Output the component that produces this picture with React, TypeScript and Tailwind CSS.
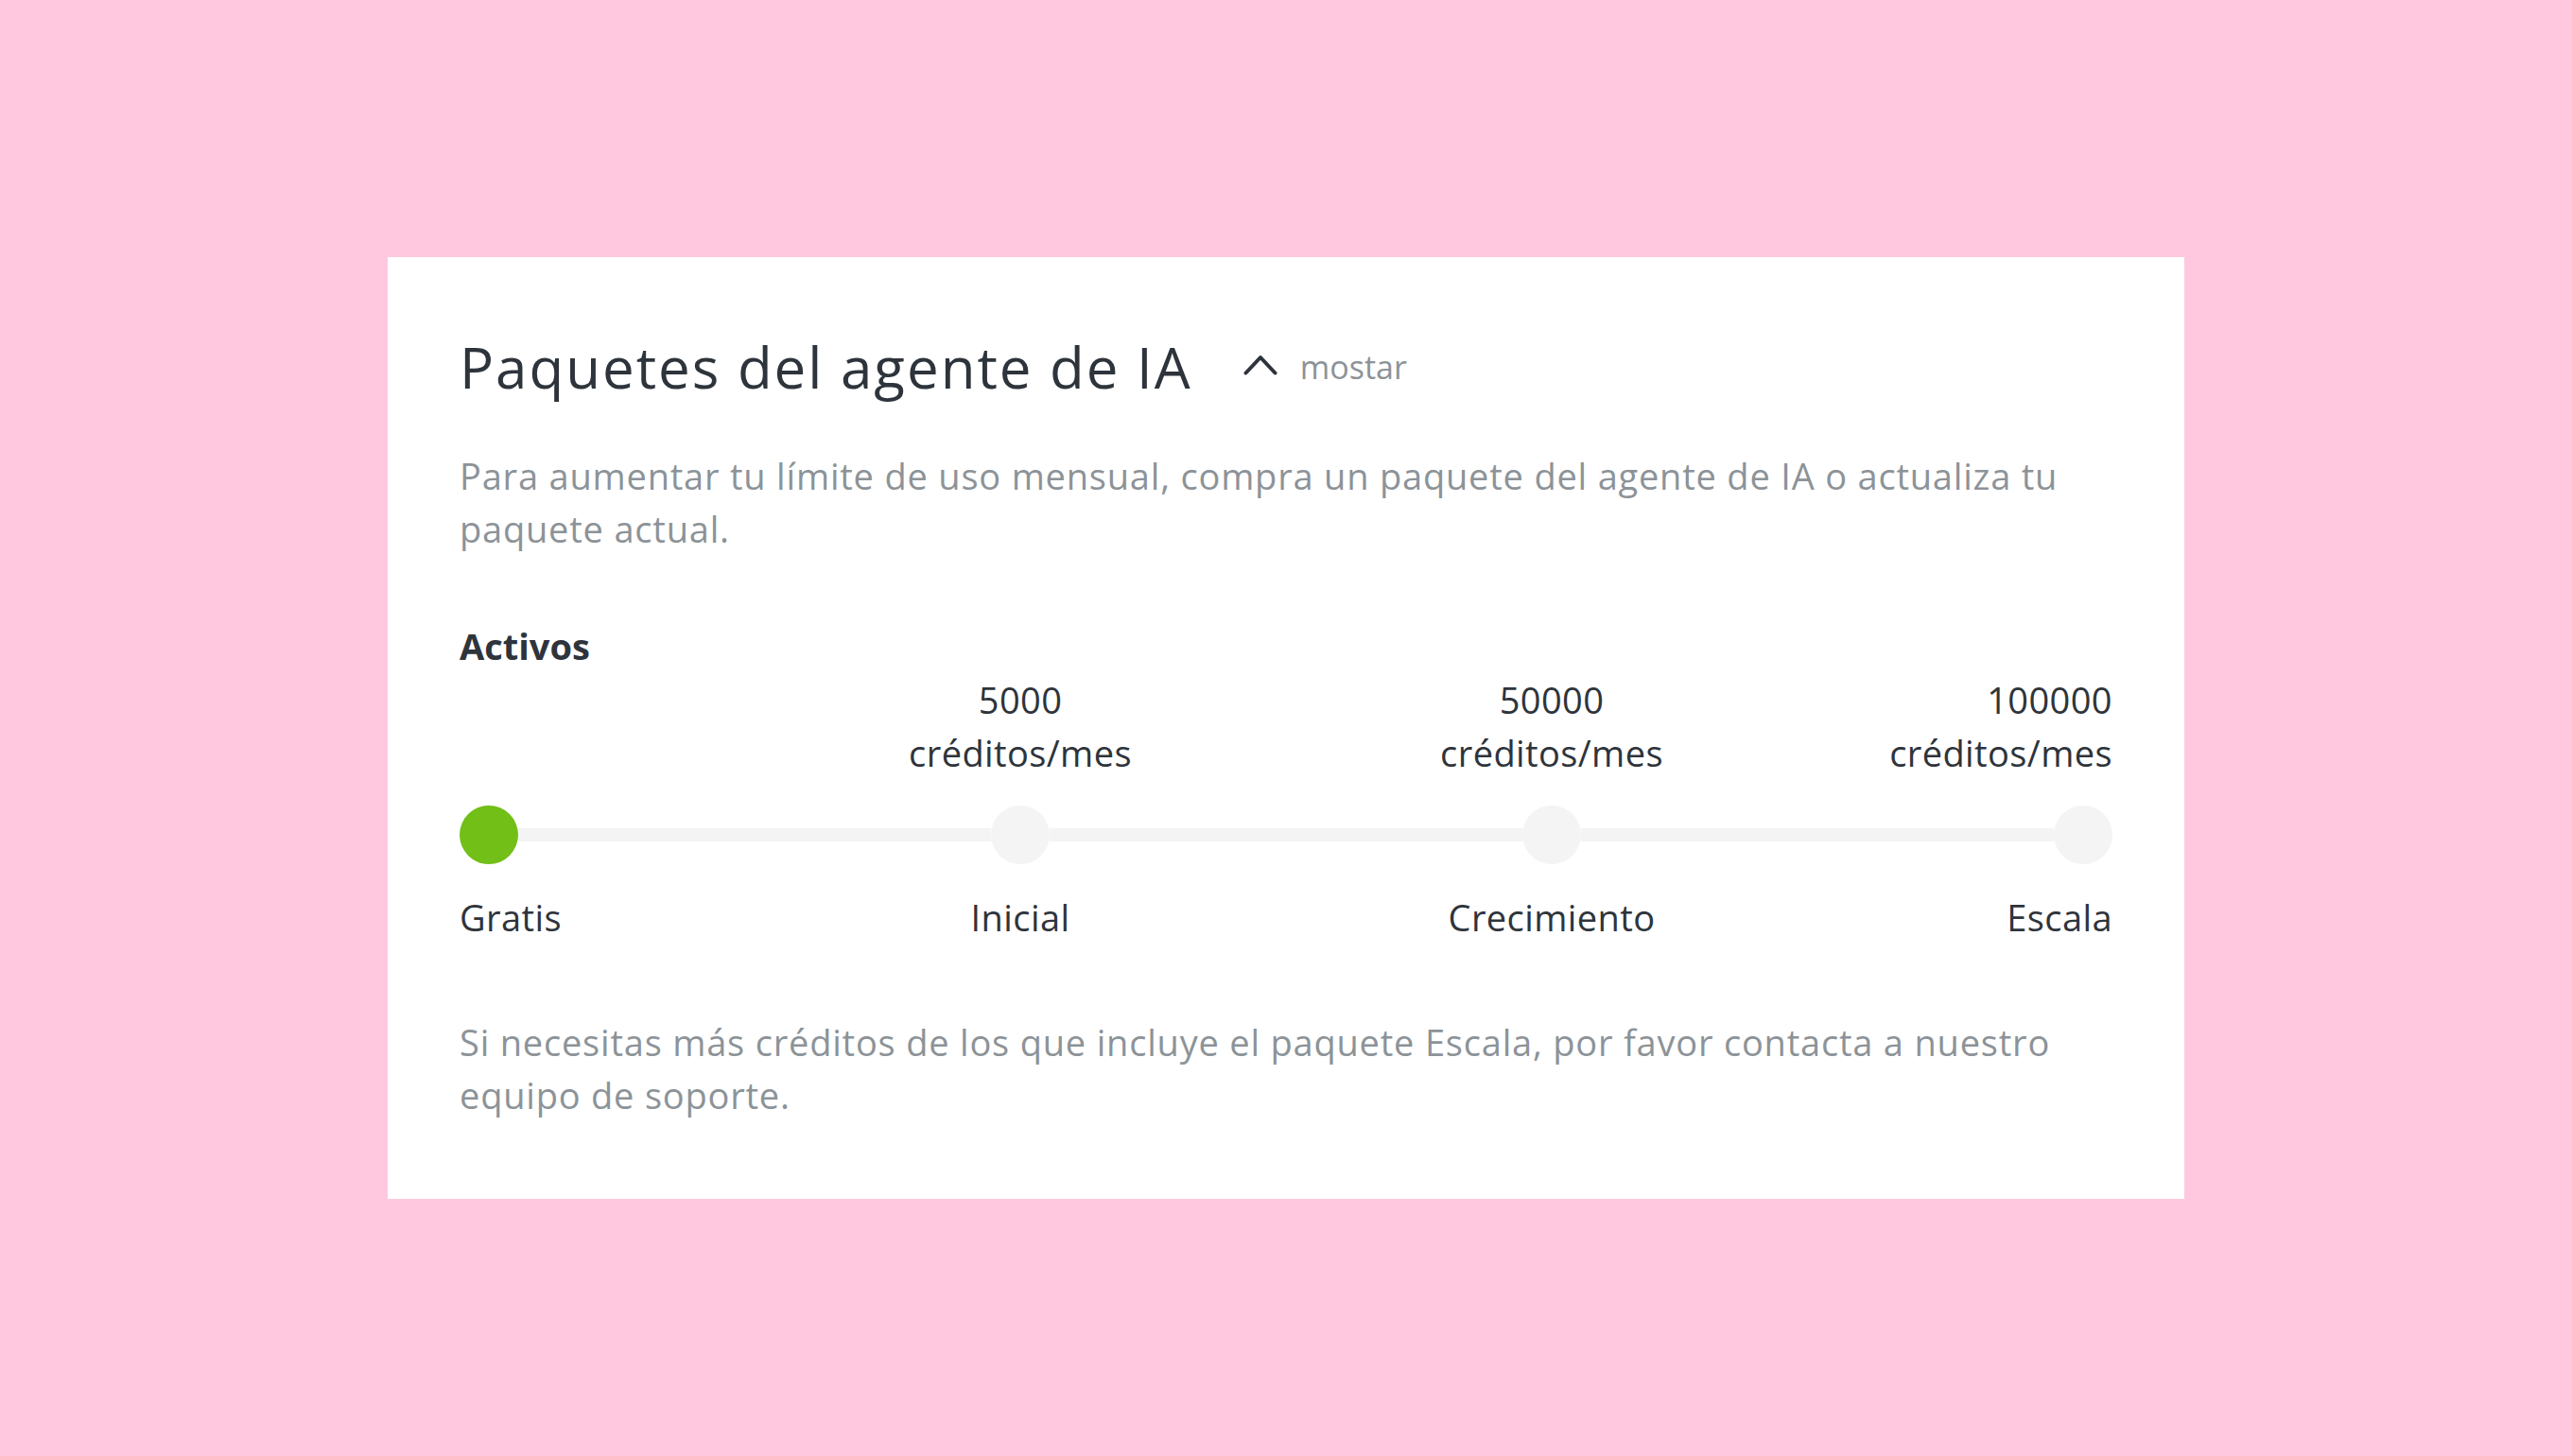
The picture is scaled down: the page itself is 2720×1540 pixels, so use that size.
import React from "react";

const tiers = [
  { name: "Gratis", credits: null },
  { name: "Inicial", credits: "5000" },
  { name: "Crecimiento", credits: "50000" },
  { name: "Escala", credits: "100000" },
];

const font = { fontFamily: "'Open Sans', 'Noto Sans', sans-serif" };

const App: React.FC = () => {
  const active = 0;

  // first item aligns left, last right, the rest centre on their dot
  const alignFor = (i: number) =>
    i === 0 ? "items-start text-left" : i === tiers.length - 1 ? "items-end text-right" : "items-center text-center";

  return (
    <div className="min-h-screen w-full bg-[#ffc8de] flex items-center justify-center" style={font}>
      <div className="w-[1900px] bg-white pl-[76px] pr-[76px] pt-[82px] pb-[82px]">
        {/* Header */}
        <div className="flex items-center">
          <h2 className="text-[60px] leading-[68px] tracking-[2px] text-[#2e343b] font-normal">
            Paquetes del agente de IA
          </h2>
          <button className="ml-[54px] flex items-center gap-[24px] text-[#8c9398]">
            <svg width="36" height="22" viewBox="0 0 36 22" fill="none" className="mt-[-4px]">
              <polyline
                points="2.5,19.5 18,3 33.5,19.5"
                stroke="#2e343b"
                strokeWidth="4"
                strokeLinecap="round"
                strokeLinejoin="round"
              />
            </svg>
            <span className="text-[34px] leading-[54px]">mostar</span>
          </button>
        </div>

        <p className="mt-[53px] text-[38px] leading-[56px] tracking-[0.8px] text-[#8c9398]">
          Para aumentar tu límite de uso mensual, compra un paquete del agente de IA o actualiza tu paquete actual.
        </p>

        <h3 className="mt-[68px] text-[38px] leading-[56px] font-bold text-[#2e343b]">Activos</h3>

        {/* Credits above each tier */}
        <div className="mt-[1px] flex justify-between">
          {tiers.map((t, i) => (
            <div key={t.name} className={`w-[62px] flex flex-col ${alignFor(i)}`}>
              {t.credits ? (
                <div className="whitespace-nowrap text-[38px] leading-[56px] tracking-[0.4px] text-[#2e343b] flex flex-col">
                  <span>{t.credits}</span>
                  <span>créditos/mes</span>
                </div>
              ) : (
                <div className="h-[112px]" />
              )}
            </div>
          ))}
        </div>

        {/* Slider track */}
        <div className="mt-[28px] flex items-center">
          {tiers.map((t, i) => (
            <React.Fragment key={t.name}>
              <div
                className={`w-[62px] h-[62px] rounded-full shrink-0 ${
                  i === active ? "bg-[#71bf17]" : "bg-[#f4f4f4]"
                }`}
              />
              {i < tiers.length - 1 && <div className="flex-1 h-[14px] bg-[#f4f4f4]" />}
            </React.Fragment>
          ))}
        </div>

        {/* Tier names */}
        <div className="mt-[28px] flex justify-between">
          {tiers.map((t, i) => (
            <div key={t.name} className={`w-[62px] flex flex-col ${alignFor(i)}`}>
              <span className="whitespace-nowrap text-[38px] leading-[56px] tracking-[0.4px] text-[#2e343b]">
                {t.name}
              </span>
            </div>
          ))}
        </div>

        <p className="mt-[76px] text-[38px] leading-[56px] tracking-[0.8px] text-[#8c9398]">
          Si necesitas más créditos de los que incluye el paquete Escala, por favor contacta a nuestro equipo de soporte.
        </p>
      </div>
    </div>
  );
};

export default App;
